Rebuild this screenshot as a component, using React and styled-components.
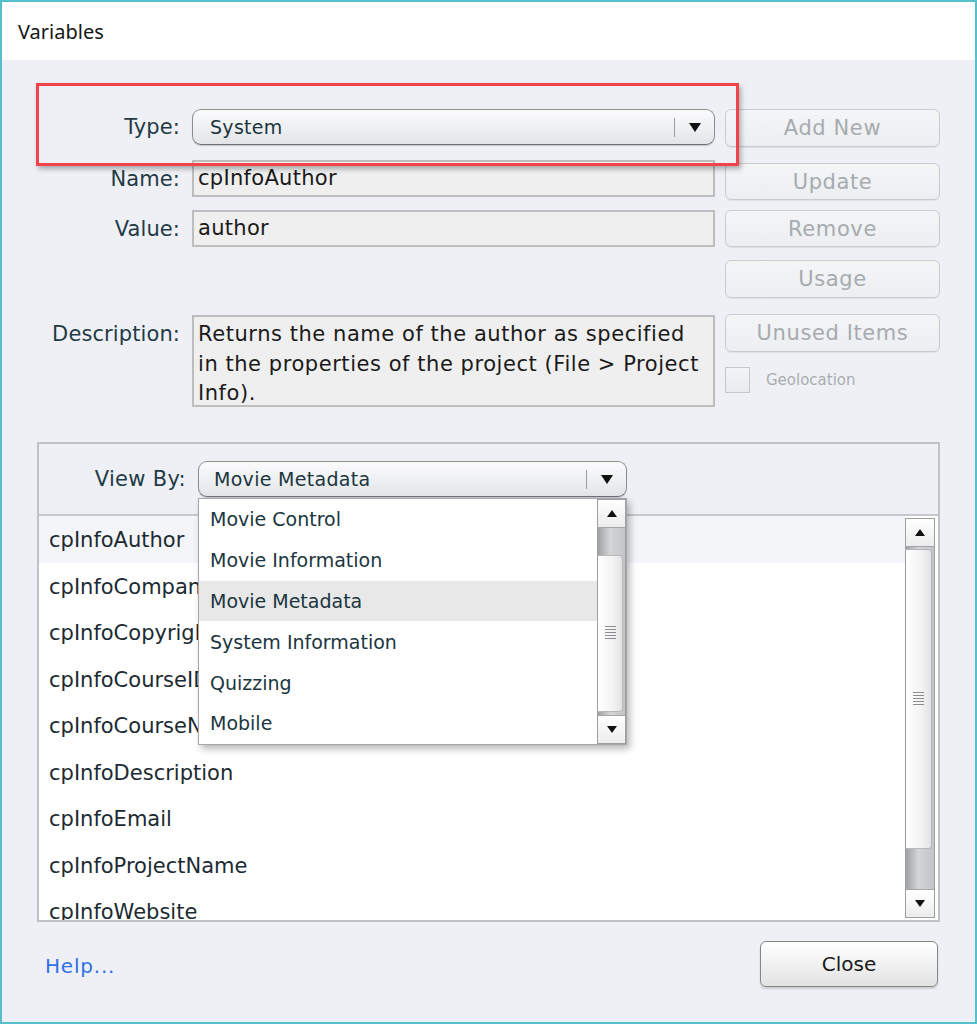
import React from 'react';
import styled, { createGlobalStyle } from 'styled-components';

const GlobalStyle = createGlobalStyle`
  html, body {
    margin: 0;
    padding: 0;
    background: #fff;
  }
  * {
    box-sizing: border-box;
  }
`;

const Window = styled.div`
  position: relative;
  width: 977px;
  height: 1024px;
  border: 2px solid #56bfcc;
  display: flex;
  flex-direction: column;
  font-family: "DejaVu Sans", Verdana, sans-serif;
  color: #1f3b46;
  overflow: hidden;
`;

const TitleBar = styled.div`
  height: 58px;
  background: #fff;
  display: flex;
  align-items: center;
  padding-left: 16px;
  font-family: "Noto Sans", "Open Sans", sans-serif;
  font-size: 20px;
  color: #161616;
`;

const Body = styled.div`
  flex: 1;
  background: #eff0f5;
  padding: 49px 35px 0 35px;
  display: flex;
  flex-direction: column;
`;

const TopSection = styled.div`
  display: flex;
  gap: 10px;
`;

const FormColumn = styled.div`
  width: 678px;
  display: flex;
  flex-direction: column;
`;

const FormRow = styled.div`
  display: grid;
  grid-template-columns: 143px minmax(0, 1fr);
  column-gap: 12px;
  margin-top: ${({ $mt }) => $mt || 0}px;
  align-items: ${({ $top }) => ($top ? 'start' : 'center')};
`;

const Label = styled.div`
  text-align: right;
  font-size: 21px;
  letter-spacing: 0.1px;
  color: #1f3b46;
  padding-top: ${({ $pt }) => $pt || 0}px;
`;

const Field = styled.div`
  min-width: 0;
  height: ${({ $h }) => $h || 37}px;
  background: #efefef;
  border: 2px solid #bdbdbd;
  padding: ${({ $multi }) => ($multi ? '3px 4px' : '0 4px')};
  display: flex;
  flex-direction: column;
  justify-content: ${({ $multi }) => ($multi ? 'flex-start' : 'center')};
  font-size: 21px;
  letter-spacing: ${({ $multi }) => ($multi ? 0.55 : 0.3)}px;
  line-height: 29.5px;
  color: #1a1a1a;
  white-space: nowrap;
  overflow: hidden;
`;

const SelectWrap = styled.div`
  position: relative;
  width: ${({ $w }) => ($w ? `${$w}px` : 'auto')};
`;

const SelectBox = styled.div`
  height: 36px;
  border: 1px solid #8c8f92;
  border-bottom-color: #6f7275;
  border-radius: 9px;
  background: linear-gradient(#fbfbfc, #eceef0 60%, #e2e4e6);
  box-shadow: 0 1px 1px rgba(0, 0, 0, 0.18);
  display: flex;
  align-items: center;
  padding-left: ${({ $pl }) => $pl || 17}px;
  font-size: ${({ $fs }) => $fs || 19}px;
  letter-spacing: 0.3px;
  color: #1b3640;
`;

const SelectText = styled.span`
  flex: 1;
`;

const SelectSep = styled.span`
  width: 1px;
  height: 19px;
  background: #9a9da0;
`;

const SelectArrow = styled.span`
  width: 39px;
  display: flex;
  justify-content: center;
  &::after {
    content: '';
    border-left: 6px solid transparent;
    border-right: 6px solid transparent;
    border-top: 9px solid #111;
  }
`;

const ButtonColumn = styled.div`
  width: 215px;
  display: flex;
  flex-direction: column;
`;

const SideButton = styled.div`
  height: ${({ $h }) => $h || 38}px;
  margin-top: ${({ $mt }) => $mt || 0}px;
  border: 1px solid #c9cbce;
  border-radius: 6px;
  background: linear-gradient(#f4f5f7, #eceef1);
  box-shadow: 0 1px 0 rgba(0, 0, 0, 0.06);
  display: flex;
  align-items: center;
  justify-content: center;
  font-size: 21px;
  letter-spacing: 0.6px;
  color: #a7abaf;
`;

const CheckRow = styled.label`
  margin-top: 15px;
  display: flex;
  align-items: center;
  gap: 16px;
  font-size: 15px;
  color: #a9adb1;
`;

const CheckBox = styled.span`
  width: 25px;
  height: 26px;
  border: 1px solid #c4c6c9;
  background: linear-gradient(#f3f4f6, #eaebee);
`;

const Panel = styled.div`
  margin-top: 35px;
  height: 480px;
  border: 2px solid #c0c2c6;
  display: flex;
  flex-direction: column;
`;

const PanelHeader = styled.div`
  height: 72px;
  padding-top: 17px;
  display: flex;
  align-items: flex-start;
  gap: 12px;
  border-bottom: 2px solid #c6c8cc;
`;

const HeaderLabel = styled.div`
  width: 147px;
  height: 36px;
  display: flex;
  align-items: center;
  justify-content: flex-end;
  font-size: 21px;
  letter-spacing: 0.3px;
  color: #1f3b46;
`;

const ListArea = styled.div`
  flex: 1;
  background: #fff;
  display: flex;
  overflow: hidden;
`;

const Rows = styled.div`
  flex: 1;
  display: flex;
  flex-direction: column;
`;

const Row = styled.div`
  height: 46.5px;
  flex-shrink: 0;
  display: flex;
  align-items: center;
  padding: 2px 0 0 10px;
  font-size: 21px;
  color: #1c2a31;
  background: ${({ $active }) => ($active ? '#f4f5f9' : 'transparent')};
`;

const Scrollbar = styled.div`
  width: ${({ $w }) => $w || 30}px;
  margin: ${({ $m }) => $m || '0'};
  border: 1px solid #9c9ea1;
  background: #eeeeee;
  display: flex;
  flex-direction: column;
`;

const ArrowButton = styled.div`
  height: 28px;
  flex-shrink: 0;
  background: linear-gradient(#ffffff, #ececec);
  border-top: ${({ $down }) => ($down ? '1px solid #a3a5a8' : 'none')};
  border-bottom: ${({ $down }) => ($down ? 'none' : '1px solid #a3a5a8')};
  display: flex;
  align-items: center;
  justify-content: center;
  &::after {
    content: '';
    border-left: 5px solid transparent;
    border-right: 5px solid transparent;
    ${({ $down }) =>
      $down ? 'border-top: 7px solid #111;' : 'border-bottom: 7px solid #111;'}
  }
`;

const Track = styled.div`
  flex: 1;
  display: flex;
  flex-direction: column;
  background: linear-gradient(90deg, #9fa1a3, #d4d5d6 45%, #c3c4c6);
`;

const Thumb = styled.div`
  margin-top: ${({ $top }) => $top}px;
  height: ${({ $h }) => $h}px;
  margin-right: 2px;
  border: 1px solid #b5b7ba;
  border-left: none;
  border-radius: 0 4px 4px 0;
  background: linear-gradient(90deg, #ffffff, #f3f3f3 60%, #e3e3e3);
  display: flex;
  align-items: center;
  justify-content: center;
  &::after {
    content: '';
    width: 11px;
    height: 15px;
    background: repeating-linear-gradient(#8a8c8f 0 1px, transparent 1px 3px);
  }
`;

const Popup = styled.div`
  position: absolute;
  top: 37px;
  left: 0;
  width: 429px;
  height: 247px;
  background: #fff;
  border: 1px solid #a5a7aa;
  box-shadow: 3px 4px 7px rgba(0, 0, 0, 0.28);
  display: flex;
  z-index: 2;
`;

const MenuList = styled.div`
  flex: 1;
  display: flex;
  flex-direction: column;
`;

const MenuItem = styled.div`
  height: 40.8px;
  display: flex;
  align-items: center;
  padding-left: 11px;
  font-size: 19px;
  color: #1b3640;
  background: ${({ $active }) => ($active ? '#e8e8e8' : 'transparent')};
`;

const Footer = styled.div`
  margin-top: 19px;
  display: flex;
  justify-content: space-between;
  align-items: center;
  padding: 0 2px 0 8px;
`;

const HelpLink = styled.a`
  font-size: 20px;
  color: #2f72e6;
  text-decoration: none;
  letter-spacing: 0.8px;
  padding-top: 4px;
`;

const CloseButton = styled.div`
  width: 178px;
  height: 46px;
  border: 1px solid #85888b;
  border-radius: 6px;
  background: linear-gradient(#ffffff, #f1f1f1 50%, #e2e2e2);
  box-shadow: 0 2px 2px rgba(0, 0, 0, 0.15);
  display: flex;
  align-items: center;
  justify-content: center;
  font-size: 20px;
  color: #1a1a1a;
`;

const Annotation = styled.div`
  position: absolute;
  left: 34px;
  top: 81px;
  width: 703px;
  height: 83px;
  border: 3px solid #f2434b;
  box-shadow: 2px 3px 5px rgba(0, 0, 0, 0.3);
  pointer-events: none;
`;

const variables = [
  'cpInfoAuthor',
  'cpInfoCompany',
  'cpInfoCopyright',
  'cpInfoCourseID',
  'cpInfoCourseName',
  'cpInfoDescription',
  'cpInfoEmail',
  'cpInfoProjectName',
  'cpInfoWebsite',
];

const categories = [
  'Movie Control',
  'Movie Information',
  'Movie Metadata',
  'System Information',
  'Quizzing',
  'Mobile',
];

const descriptionLines = [
  'Returns the name of the author as specified',
  'in the properties of the project (File > Project',
  'Info).',
];

const Select = ({ value, width, pl, fs, children }) => (
  <SelectWrap $w={width}>
    <SelectBox $pl={pl} $fs={fs}>
      <SelectText>{value}</SelectText>
      <SelectSep />
      <SelectArrow />
    </SelectBox>
    {children}
  </SelectWrap>
);

export default function App() {
  return (
    <>
      <GlobalStyle />
      <Window>
        <TitleBar>Variables</TitleBar>
        <Body>
          <TopSection>
            <FormColumn>
              <FormRow>
                <Label>Type:</Label>
                <Select value="System" pl={17} fs={19} />
              </FormRow>
              <FormRow $mt={15}>
                <Label>Name:</Label>
                <Field>cpInfoAuthor</Field>
              </FormRow>
              <FormRow $mt={13}>
                <Label>Value:</Label>
                <Field>author</Field>
              </FormRow>
              <FormRow $mt={68} $top>
                <Label $pt={7}>Description:</Label>
                <Field $h={92} $multi>
                  {descriptionLines.map((line) => (
                    <span key={line}>{line}</span>
                  ))}
                </Field>
              </FormRow>
            </FormColumn>
            <ButtonColumn>
              <SideButton>Add New</SideButton>
              <SideButton $mt={16} $h={37}>Update</SideButton>
              <SideButton $mt={10} $h={37}>Remove</SideButton>
              <SideButton $mt={13}>Usage</SideButton>
              <SideButton $mt={16}>Unused Items</SideButton>
              <CheckRow>
                <CheckBox />
                Geolocation
              </CheckRow>
            </ButtonColumn>
          </TopSection>

          <Panel>
            <PanelHeader>
              <HeaderLabel>View By:</HeaderLabel>
              <Select value="Movie Metadata" width={429} pl={15} fs={19}>
                <Popup>
                  <MenuList>
                    {categories.map((c) => (
                      <MenuItem key={c} $active={c === 'Movie Metadata'}>
                        {c}
                      </MenuItem>
                    ))}
                  </MenuList>
                  <Scrollbar $w={29}>
                    <ArrowButton />
                    <Track>
                      <Thumb $top={27} $h={157} />
                    </Track>
                    <ArrowButton $down />
                  </Scrollbar>
                </Popup>
              </Select>
            </PanelHeader>
            <ListArea>
              <Rows>
                {variables.map((v, i) => (
                  <Row key={v} $active={i === 0}>
                    {v}
                  </Row>
                ))}
              </Rows>
              <Scrollbar $w={30} $m="2px 3px 2px 0">
                <ArrowButton />
                <Track>
                  <Thumb $top={2} $h={300} />
                </Track>
                <ArrowButton $down />
              </Scrollbar>
            </ListArea>
          </Panel>

          <Footer>
            <HelpLink href="#">Help...</HelpLink>
            <CloseButton>Close</CloseButton>
          </Footer>
        </Body>
        <Annotation />
      </Window>
    </>
  );
}
